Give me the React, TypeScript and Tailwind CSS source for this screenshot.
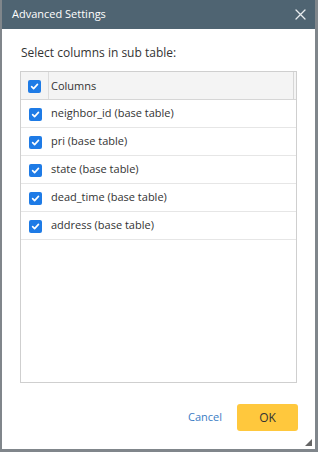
import React from 'react';

const columns = [
  'neighbor_id (base table)',
  'pri (base table)',
  'state (base table)',
  'dead_time (base table)',
  'address (base table)',
];

function Check() {
  return (
    <span className="w-[13px] h-[13px] rounded-[2px] bg-[#1e7be6] flex items-center justify-center">
      <svg width="9" height="9" viewBox="0 0 10 10" fill="none" stroke="white" strokeWidth="1.8" strokeLinecap="round" strokeLinejoin="round">
        <path d="M1.8 5.2 4 7.4 8.3 2.6" />
      </svg>
    </span>
  );
}

export default function App() {
  return (
    <div className="w-[318px] h-[452px] bg-[#80868b] pl-[2px] pr-[3px] pb-[3px] font-['Open_Sans',sans-serif]">
      <div className="h-full flex flex-col bg-white">
        {/* Header */}
        <div className="h-[29px] bg-[#4f6472] flex items-center justify-between pl-[10px] pr-[9px] shrink-0">
          <span className="text-white text-[11px] font-medium">Advanced Settings</span>
          <svg width="11" height="11" viewBox="0 0 11 11" stroke="#e8ecef" strokeWidth="1.3" strokeLinecap="round">
            <path d="M1 1 10 10M10 1 1 10" />
          </svg>
        </div>

        {/* Body */}
        <div className="flex-1 flex flex-col px-[18px] pt-[16px]">
          <div className="text-[12px] text-[#333] leading-[15px] pl-px">Select columns in sub table:</div>
          <div className="mt-[11px] h-[312px] border border-[#cfcfcf] flex flex-col">
            <div className="h-[28px] bg-[#f4f4f4] border-b border-[#d6d6d6] flex shrink-0">
              <div className="w-[28px] border-r border-[#dcdcdc] flex items-center justify-center pt-[2px]">
                <Check />
              </div>
              <div className="flex-1 flex items-center pl-[2px] pt-px text-[11px] text-[#333]">Columns</div>
              <div className="w-[3px] border-l border-[#d6d6d6]" />
            </div>
            {columns.map((c) => (
              <div key={c} className="h-[28px] border-b border-[#e6e6e6] flex items-center shrink-0">
                <div className="w-[28px] flex items-center justify-center pt-px">
                  <Check />
                </div>
                <span className="pl-[2px] text-[11px] text-[#333]">{c}</span>
              </div>
            ))}
          </div>
        </div>

        {/* Footer */}
        <div className="flex items-center justify-end gap-[15px] pr-[17px] pb-[18px] relative">
          <span className="text-[11px] text-[#3b7cc4]">Cancel</span>
          <button className="w-[61px] h-[27px] rounded-[3px] bg-[#ffc83d] text-[12px] text-[#333]">OK</button>
          <svg className="absolute right-[3px] bottom-[3px]" width="7" height="7" viewBox="0 0 7 7">
            <path d="M7 0 7 7 0 7Z" fill="#666" />
          </svg>
        </div>
      </div>
    </div>
  );
}
